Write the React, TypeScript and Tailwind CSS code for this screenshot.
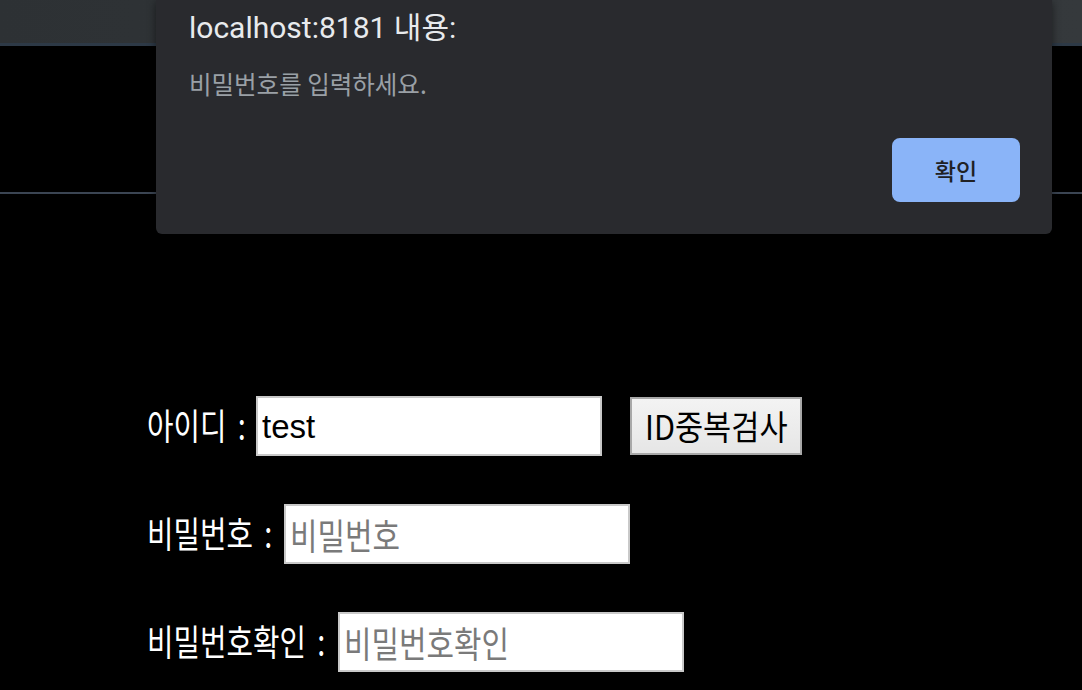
import React from "react";

const KR = "font-['Noto_Sans_CJK_KR',sans-serif]";

function Label({ text, w }: { text: string; w: string }) {
  return (
    <div className={`${w} shrink-0 overflow-visible`}>
      <span
        className={`inline-block origin-left scale-x-[0.8] whitespace-pre text-[36px] leading-none text-white ${KR}`}
      >
        {text} <span className="ml-[6px]">:</span>
      </span>
    </div>
  );
}

function FakeInput({ value, placeholder }: { value?: string; placeholder?: string }) {
  return (
    <div className="flex h-[60px] w-[346px] shrink-0 items-center overflow-hidden border-2 border-[#c9c9c9] bg-white pl-[4px]">
      {value ? (
        <span className="font-['Liberation_Sans',sans-serif] text-[33px] leading-none text-black">{value}</span>
      ) : (
        <span
          className={`inline-block origin-left scale-x-[0.83] whitespace-nowrap text-[36px] leading-none text-[#7a7a7a] ${KR}`}
        >
          {placeholder}
        </span>
      )}
    </div>
  );
}

export default function App() {
  return (
    <div className="relative h-[690px] w-full overflow-hidden bg-black">
      {/* browser top bar */}
      <div className="h-[43px] bg-gradient-to-r from-[#2d3134] to-[#35393c]" />
      <div className="h-[3px] bg-[#2d3946]" />
      <div className="h-[146px]" />
      <div className="h-[2px] bg-[#3b4553]" />

      {/* form */}
      <div className="flex flex-col gap-[48px] pl-[147px] pt-[202px]">
        <div className="flex items-center">
          <Label text="아이디" w="w-[109px]" />
          <FakeInput value="test" />
          <div className="ml-[28px] flex h-[58px] w-[172px] items-center justify-center border-2 border-[#a8a8a8] bg-gradient-to-b from-[#f3f3f3] to-[#e6e6e6]">
            <span
              className={`inline-block scale-x-[0.9] whitespace-nowrap text-[34px] leading-none text-black ${KR}`}
            >
              ID중복검사
            </span>
          </div>
        </div>
        <div className="flex items-center">
          <Label text="비밀번호" w="w-[137px]" />
          <FakeInput placeholder="비밀번호" />
        </div>
        <div className="flex items-center">
          <Label text="비밀번호확인" w="w-[191px]" />
          <FakeInput placeholder="비밀번호확인" />
        </div>
      </div>

      {/* alert dialog */}
      <div className="absolute left-[156px] top-0 flex h-[234px] w-[896px] flex-col rounded-b-[6px] bg-[#292a2e] px-[33px] shadow-[0_2px_8px_rgba(0,0,0,0.5)]">
        <div
          className={`mt-[11px] font-['Roboto','Noto_Sans_CJK_KR',sans-serif] text-[30px] leading-[34px] text-[#e8eaed]`}
        >
          localhost:8181 내용:
        </div>
        <div className={`mt-[24px] text-[24.5px] leading-[30px] text-[#9aa0a6] ${KR}`}>
          비밀번호를 입력하세요.
        </div>
        <div className="mt-auto mb-[32px] flex justify-end">
          <div
            className={`mr-[-1px] flex h-[64px] w-[128px] items-center justify-center rounded-[8px] bg-[#8ab4f8] text-[23px] font-medium text-[#202124] ${KR}`}
          >
            확인
          </div>
        </div>
      </div>
    </div>
  );
}
